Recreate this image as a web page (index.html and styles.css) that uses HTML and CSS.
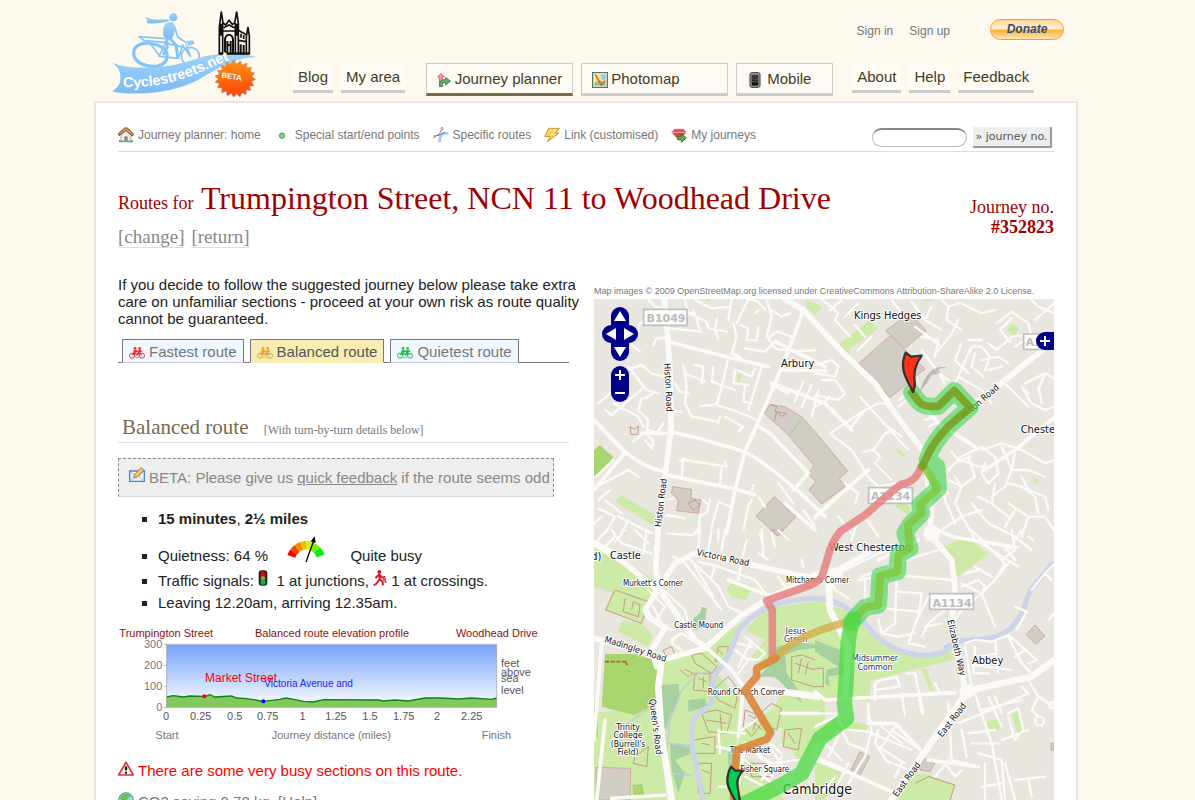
FILE: index.html
```html
<!DOCTYPE html>
<html lang="en">
<head>
<meta charset="utf-8">
<title>CycleStreets: Journey planner</title>
<link rel="stylesheet" href="styles.css">
</head>
<body>
<svg class="defs" width="0" height="0" aria-hidden="true">
  <symbol id="bike" viewBox="0 0 48 36">
    <g fill="none" stroke="currentColor" stroke-width="3"><circle cx="9" cy="26" r="7.5"/><circle cx="39" cy="26" r="7.5"/><circle cx="24" cy="26" r="7" stroke-width="2"/><path d="M9 26 16 14 30 14 39 26M16 14 24 26 31 12"/></g>
    <g fill="currentColor"><circle cx="18" cy="4" r="4"/><circle cx="32" cy="4" r="4"/><path d="M14 8h8l5 6-7 2-3 8h-5zM28 8h8l4 6-6 2-2 8h-5z"/></g>
  </symbol>
</svg>

<div class="wrap">
<header class="header">
  <a class="logo" href="#" aria-label="CycleStreets home">
    <svg width="146" height="87" viewBox="18 15 438 261">
      <defs>
        <linearGradient id="blue" x1="0" y1="0" x2="0" y2="1"><stop offset="0" stop-color="#9fd2fb"/><stop offset="1" stop-color="#7bbcf2"/></linearGradient>
        <linearGradient id="org" x1="0" y1="0" x2="0" y2="1"><stop offset="0" stop-color="#ff9416"/><stop offset="1" stop-color="#fb4209"/></linearGradient>
        <path id="ribbonText" d="M54 246C150 250 220 228 280 204S345 172 400 158"/>
      </defs>
      <g fill="none" stroke="#85c4f7" stroke-linecap="round" stroke-linejoin="round">
        <path stroke-width="10" d="M150 184C112 184 86 168 86 145s22-33 48-30 50 14 52 35-14 30-30 34"/>
        <circle cx="256" cy="154" r="27" stroke-width="5"/>
        <path stroke-width="5" d="M102 95 118 107 182 112M102 95 182 101M134 114 165 154 222 160M186 104 162 154M186 116 232 126 220 158M232 120 256 154M244 120 256 154"/>
        <path stroke-width="9" d="M192 98 213 120 218 156M186 96 186 128 176 146"/>
        <path stroke-width="5" d="M210 68 218 96 244 113"/>
      </g>
      <g fill="url(#blue)">
        <ellipse cx="205" cy="37" rx="12" ry="12"/>
        <path d="M184 54C192 48 206 50 209 60 212 74 208 90 200 101 190 105 174 102 174 84 174 70 177 60 184 54Z"/>
        <path d="M194 44C170 42 150 48 119 35 126 43 130 46 124 54 150 58 170 54 192 48Z"/>
        <path d="M246 108 266 106 268 116 250 122Z"/>
        <path d="M20 171C58 192 130 190 180 184 270 172 300 140 392 146 420 148 440 150 455 157 380 158 330 198 280 224 210 262 100 274 22 260 42 244 48 236 46 210 42 190 34 184 20 171Z"/>
      </g>
      <g fill="none" stroke="#111" stroke-width="5">
        <path fill="#fef9ee" d="M343 145V66L349 20 354 54 362 60 372 46 382 58 389 54 395 20 400 56V76L425 90 429 66 433 94V145z"/>
        <path d="M353 54V145M391 54V145M400 76V145M424 92V145M356 68 372 60 388 68M354 78H390M408 86V98M416 90V102M401 106 423 110" />
        <path stroke-width="6" d="M360 145V106C360 84 384 84 384 106V145M367 145V108M377 145V108M367 120H378M407 145V118M416 145V120M341 146H434"/>
        <path stroke-width="8" d="M348 56V92M395 56V92"/>
      </g>
      <text class="logo-text"><textPath href="#ribbonText">Cyclestreets.net</textPath></text>
      <path fill="url(#org)" stroke="#999" stroke-width="1.5" d="M386 164l9 13 11-10 5 13 14-6 1 14 14-1-4 13 13 4-8 11 11 8-12 7 7 12-13 2 3 13-13-2-1 14-12-6-6 13-10-10-9 11-7-12-12 8-3-14-14 4 1-14-14-1 6-12-13-5 10-9-10-9 13-5-6-12 14-1-2-14 13 3 2-13 12 6z"/>
      <text class="logo-beta" transform="rotate(9 380 214)" x="380" y="222" text-anchor="middle">BETA</text>
    </svg>
  </a>
  <div class="header-main">
    <div class="account">
      <a href="#">Sign in</a><a href="#">Sign up</a>
      <button class="donate" type="button">Donate</button>
    </div>
    <nav class="nav">
      <a href="#">Blog</a>
      <a href="#">My area</a>
      <a class="boxed wide first active" href="#"><svg width="16" height="16" viewBox="0 0 48 48"><path d="M8 44V14H2L13 2l12 12h-7v14" fill="#e99" stroke="#c66" stroke-width="3"/><path d="M9 46V36c0-10 8-14 20-13v-7l16 12-16 12v-7c-8-1-11 1-11 7v6z" fill="#5db36a" stroke="#278038" stroke-width="3"/></svg>Journey planner</a>
      <a class="boxed wide" href="#"><svg width="16" height="16" viewBox="0 0 48 48"><path d="M2 2h44v44H2z" fill="#fff" stroke="#5a7563" stroke-width="4"/><path d="M7 7h34v34H7z" fill="#f8e48a"/><path d="M26 7h15v16H30z" fill="#9cc5ee"/><path d="M7 33l14-8 20 6v10H7z" fill="#8fc876"/><path d="M10 7l18 33 12-15" fill="none" stroke="#e8553e" stroke-width="4"/></svg>Photomap</a>
      <a class="boxed phone" href="#"><svg width="16" height="16" viewBox="0 0 48 48"><rect x="9" y="2" width="30" height="44" rx="6" fill="#aaa" stroke="#333" stroke-width="3"/><rect x="14" y="8" width="20" height="33" fill="#111"/><path d="M18 10v24M24 10v24M30 10v24" stroke="#9bc" stroke-width="3" stroke-dasharray="3 3"/></svg>Mobile</a>
      <a class="after" href="#">About</a>
      <a href="#">Help</a>
      <a href="#">Feedback</a>
    </nav>
  </div>
</header>

<main class="page">
  <div class="subnav">
    <a href="#"><svg width="16" height="16" viewBox="0 0 48 48"><path d="M3 46h42v-8l-7 3H10l-7-3z" fill="#65ad55"/><path d="M9 22 24 10l15 14v18H9z" fill="#eee" stroke="#888" stroke-width="2"/><path d="M19 42V28h10v14z" fill="#888"/><path d="M3 26 1 20 20 3h8l19 18-4 6-19-16z" fill="#d99a58" stroke="#7c4a20" stroke-width="3"/></svg>Journey planner: home</a>
    <a class="dot" href="#"><svg width="16" height="16" viewBox="0 0 48 48"><circle cx="24" cy="26" r="8" fill="#82cf82" stroke="#4ea64e" stroke-width="3"/></svg>Special start/end points</a>
    <a href="#"><svg width="16" height="16" viewBox="0 0 48 48"><path d="M20 46C18 28 26 16 46 20" fill="none" stroke="#a8cbf5" stroke-width="8"/><path d="M4 29 18 24 27 5M8 25 18 24 36 16" fill="none" stroke="#667" stroke-width="2.5"/><circle cx="4" cy="29" r="3" fill="#fff" stroke="#667" stroke-width="2"/><circle cx="27" cy="5" r="3.5" fill="#fff" stroke="#667" stroke-width="2"/></svg>Specific routes</a>
    <a href="#"><svg width="16" height="16" viewBox="0 0 48 48"><path d="M14 4H46L34 18H45L10 44 19 29H2z" fill="#fbd25d" stroke="#cc9429" stroke-width="3"/><path d="M16 9h20L22 23h10" fill="none" stroke="#fff0a5" stroke-width="3"/></svg>Link (customised)</a>
    <a href="#"><svg width="16" height="16" viewBox="0 0 48 48"><path d="M10 7h28l8 9-22 24L2 16z" fill="#e7434e" stroke="#d98080" stroke-width="2"/><path d="M3 16h42" fill="none" stroke="#f9a5a5" stroke-width="3"/><path d="M20 28h11v-8l15 13-15 13v-8H20z" fill="#68ad3e" stroke="#337523" stroke-width="3"/></svg>My journeys</a>
    <form class="find">
      <input type="text" aria-label="Journey number">
      <button type="button">» journey no.</button>
    </form>
  </div>

  <div class="title">
    <div>
      <h1><small>Routes for</small> Trumpington Street, NCN 11 to Woodhead Drive</h1>
      <p class="title-links"><a href="#">[change]</a><a href="#">[return]</a></p>
    </div>
    <p class="journey-no">Journey no.<strong>#352823</strong></p>
  </div>

  <div class="columns">
    <section class="details">
      <p class="notice">If you decide to follow the suggested journey below please take extra care on unfamiliar sections - proceed at your own risk as route quality cannot be guaranteed.</p>
      <div class="tabs">
        <a class="fast" href="#"><svg width="16" height="12"><use href="#bike"/></svg>Fastest route</a>
        <a class="balanced" href="#"><svg width="16" height="12"><use href="#bike"/></svg>Balanced route</a>
        <a class="quiet" href="#"><svg width="16" height="12"><use href="#bike"/></svg>Quietest route</a>
      </div>
      <h2>Balanced route <small>[With turn-by-turn details below]</small></h2>
      <p class="beta"><svg width="16" height="16" viewBox="0 0 48 48"><path d="M2 12h44v31H2z" fill="#eef4fd" stroke="#4b83cf" stroke-width="4"/><path d="M5 15l19 15 19-15M5 40l14-13M43 40 29 27" fill="none" stroke="#8db0e0" stroke-width="2.5"/><path d="M14 33l3-11L36 2l9 7-20 21z" fill="#f6c469" stroke="#b9822e" stroke-width="3"/></svg>BETA: Please give us <a href="#">quick feedback</a> if the route seems odd</p>
      <ul class="facts">
        <li><strong>15 minutes</strong>, <strong>2½ miles</strong></li>
        <li class="quietness">Quietness: 64 %
          <svg width="38" height="28" viewBox="0 0 114 84">
            <g fill="none" stroke-width="25"><path d="M13 61A51 51 0 0 1 20 48" stroke="#f00"/><path d="M20 48A51 51 0 0 1 31 37" stroke="#f04a00"/><path d="M31 37A51 51 0 0 1 44 30" stroke="#f58a00"/><path d="M44 30A51 51 0 0 1 58 27" stroke="#eebd00"/><path d="M58 27A51 51 0 0 1 74 31" stroke="#d5f000"/><path d="M74 31A51 51 0 0 1 90 42" stroke="#80f000"/><path d="M90 42A51 51 0 0 1 101 60" stroke="#08ee12"/></g>
            <path d="M57 78 80 14" stroke="#000" stroke-width="4"/><path d="M83 1 86 21 71 16z"/>
          </svg>
          <span>Quite busy</span></li>
        <li>Traffic signals: <svg width="10" height="16" viewBox="0 0 30 48"><rect x="2" y="1" width="26" height="46" rx="9" fill="#222"/><circle cx="15" cy="12" r="8" fill="#d00c12"/><circle cx="15" cy="25" r="7" fill="#b9903a"/><circle cx="15" cy="37" r="8" fill="#0fae3d"/></svg>&nbsp; 1 at junctions, <svg width="14" height="16" viewBox="0 0 42 48"><circle cx="19" cy="6" r="6" fill="#d3202c"/><path d="M19 12 20 28 9 42 2 46M20 27 29 36 30 46M18 14 7 24M20 15 28 23 37 20M30 29l9-1M35 36l5-1" fill="none" stroke="#d3202c" stroke-width="6"/></svg> 1 at crossings.</li>
        <li class="times">Leaving 12.20am, arriving 12.35am.</li>
      </ul>

      <svg class="profile" width="451" height="124" viewBox="69 78 1353 372">
        <defs><linearGradient id="sky" x1="0" y1="0" x2="0" y2="1"><stop offset="0" stop-color="#75a3fa"/><stop offset="1" stop-color="#fff"/></linearGradient></defs>
        <path d="M215 134H1205V322H215z" fill="url(#sky)"/>
        <path d="M215 291 235 287 265 291 285 288 330 289 345 284 360 291 410 288 425 294 455 296 475 299 505 304 555 298 573 294 600 299 625 304 655 306 685 299 850 300 865 303 900 300 940 303 990 294 1040 294 1090 297 1130 294 1190 298 1205 294V322H215z" fill="#82c85d"/>
        <path d="M215 291 235 287 265 291 285 288 330 289 345 284 360 291 410 288 425 294 455 296 475 299 505 304 555 298 573 294 600 299 625 304 655 306 685 299 850 300 865 303 900 300 940 303 990 294 1040 294 1090 297 1130 294 1190 298 1205 294" fill="none" stroke="#0a870a" stroke-width="4"/>
        <path d="M206 133H1205V322H206M215 133V322M206 196H215M206 259H215" fill="none" stroke="#999" stroke-width="2"/>
        <circle cx="328" cy="289" r="6" fill="#f00"/><circle cx="505" cy="304" r="6" fill="#00f"/>
        <g class="p-title"><text x="73" y="111">Trumpington Street</text><text x="711" y="111" text-anchor="middle">Balanced route elevation profile</text><text x="1328" y="111" text-anchor="end">Woodhead Drive</text></g>
        <g class="p-axis" text-anchor="end"><text x="202" y="144">300</text><text x="202" y="207">200</text><text x="202" y="270">100</text><text x="202" y="333">0</text></g>
        <g class="p-ticks" text-anchor="middle"><text x="213" y="361">0</text><text x="317" y="361">0.25</text><text x="419" y="361">0.5</text><text x="518" y="361">0.75</text><text x="623" y="361">1</text><text x="723" y="361">1.25</text><text x="825" y="361">1.5</text><text x="926" y="361">1.75</text><text x="1026" y="361">2</text><text x="1130" y="361">2.25</text></g>
        <g class="p-ticks"><text x="1218" y="201">feet</text><text x="1218" y="228">above</text><text x="1218" y="246">sea</text><text x="1218" y="281">level</text></g>
        <g class="p-axis"><text x="181" y="418">Start</text><text x="709" y="418" text-anchor="middle">Journey distance (miles)</text><text x="1248" y="418" text-anchor="end">Finish</text></g>
        <text class="p-red" x="330" y="246">Market Street</text><text class="p-blue" x="508" y="262">Victoria Avenue and</text>
      </svg>

      <p class="warning"><svg width="16" height="16" viewBox="0 0 48 48"><path d="M24 4 46 42H2z" fill="#fff" stroke="#d9303a" stroke-width="5" stroke-linejoin="round"/><path d="M24 16v12" stroke="#111" stroke-width="7"/><circle cx="24" cy="35" r="3.5" fill="#111"/></svg>There are some very busy sections on this route.</p>
      <p class="co2"><svg width="16" height="16" viewBox="0 0 48 48"><circle cx="24" cy="24" r="22" fill="#a8d4e8" stroke="#4ca05c" stroke-width="3"/><path d="M5 18C10 4 30 0 40 12L30 18 24 30 14 28z" fill="#6dbd62"/></svg>CO2 saving 0.78 kg. <a href="#">[Help]</a></p>
    </section>

    <section class="map-col">
      <p class="credit">Map images © 2009 OpenStreetMap.org licensed under CreativeCommons Attribution-ShareAlike 2.0 License.</p>
      <div class="map">
        <svg class="tiles" width="460" height="501" viewBox="27 87 1380 1503">
          <path class="land" d="M27 87H1407V1590H27z"/>
          <!-- parks and buildings -->
          <g>
            <path class="park" d="M665 90 712 110 690 133 665 112zM108 675 210 735 205 768 92 695zM458 310 468 310 465 338 455 335zM362 87h14v6h-14zM650 304h22v8z"/>
            <path class="field" d="M27 540 45 525 85 562 27 632z"/>
            <path class="built" d="M555 403 600 410 650 440 690 485 788 603 763 627 780 650 710 702 672 660 693 635 670 612 687 587 610 495 538 430z"/>
            <path class="built" d="M262 650 320 658 318 685 348 690 340 730 275 722 280 690 260 670zM568 680 633 740 578 798 513 738z"/>
            <path class="outline" d="M560 405 575 410 570 425 605 430 590 440 575 425 568 455M135 470 148 478 160 468 158 492 138 494zM310 700 330 690 345 705 325 722z"/>
            <path d="M612 495 650 450" stroke="#a9d592" stroke-width="5"/>
          </g>
          <g transform="translate(690 0)">
            <path class="park" d="M72 222 165 150 187 178 105 236V256zM0 100 22 112 0 132zM593 160 612 178 595 197 577 178zM248 535 272 555 265 562 245 545zM235 705 270 700 288 715 280 735zM652 632 660 624 676 636 665 643zM322 87h28l-15 10z"/>
            <path class="built" d="M225 197 330 297 225 383 132 280zM212 182 285 130 333 182 270 235z"/>
          </g>
          <g transform="translate(0 780)">
            <path class="park" d="M27 45 60 75 80 75 215 152 190 215 170 275 62 240 80 190 27 170zM110 270 170 280 205 320 190 350 100 305zM425 180 445 150 508 170 480 210 440 202zM480 300 545 235 720 210V520L560 440 520 400 500 380 540 330zM365 350 480 270 430 370 395 430 470 510 455 620 460 810H270L230 560V400z"/>
            <path class="park" d="M27 550 205 525 230 630 245 810H27zM460 600 560 540 600 480 720 500V590L640 700 590 590 460 670zM390 690H500L600 810H390zM590 550 720 555 720 600 630 670 590 640z"/>
            <path class="field" d="M60 372H150L230 378 215 520 150 555 50 530zM27 535H38V620H27zM142 765 172 762 178 800H145z"/>
            <path class="scrub" d="M228 465 280 462 285 500 255 560 240 600 220 550zM575 350 640 335 720 350 640 360 600 375 605 430 640 480 650 520 570 440 520 440 560 400zM255 640 315 650 320 670 270 690 300 730 280 790 260 720zM430 665 460 660 450 770 430 780zM310 510 360 505 365 530 310 545zM325 265 345 250 350 230 365 235 360 275 380 290 330 300z"/>
            <path class="built" d="M33 712 137 715 135 810H33zM560 0 578 18 595 0z"/>
            <path class="outline" d="M120 205 115 245 160 260 165 225 145 215 140 240M90 180 190 215 170 280 62 240zM285 420 310 440 325 430 300 418M235 360 260 350 270 375 240 375zM400 350 430 350 425 385 390 395zM320 375 350 370 395 410 380 430 330 400zM330 430 375 430 375 485 325 480zM385 480 430 440 460 480 450 535 400 510zM350 550 395 540 440 555 425 610 370 605zM325 630 390 620 390 670 330 670zM480 540 520 555 560 520 590 535 575 600 530 580 500 620 475 590zM600 600 650 595 640 660 595 650zM620 380 650 375 720 400V480L620 450zM150 680 190 650 185 710 145 700zM340 700 380 700 375 790 340 790zM490 700 560 700 560 740 500 740z"/>
            <path class="outline" d="M355 440V475M340 445 365 455M400 360 415 375M405 550 410 600M365 570 425 580M490 555 550 585M500 570 530 600M515 550 505 600M350 640 375 645M610 610 630 640M350 720 375 730M630 400 690 420M640 430 650 385M660 435 670 395"/>
            <path d="M60 395H125M100 25 120 2M122 395 128 410" stroke="#a87117" stroke-width="5" stroke-dasharray="12 5" fill="none"/>
          </g>
          <g transform="translate(690 780)">
            <path class="park" d="M385 50 455 20 522 72 430 140zM0 215 90 240 160 290 250 370 340 380 400 355 420 388 330 410 165 452V515L0 500zM515 575 550 565 565 592 525 610zM590 550 615 545 630 605 612 620zM320 420 335 415 357 485 345 482zM290 735 330 730 420 765 405 810H250zM0 580 90 570 160 585 150 610 70 600 30 630 0 640zM0 680 40 700 90 730 30 810H0z"/>
            <path class="scrub" d="M0 330 75 360 90 430 40 440 45 470 30 460 35 420 70 410 0 365z"/>
            <path class="built" d="M135 665 165 680 130 745 103 730zM325 685 360 700 345 725 315 720zM660 285 690 318 662 342 633 314zM708 640h9v20h-9z"/>
            <path class="outline" d="M0 415H25V470H0M300 760 340 740 420 765 405 810"/>
            <path d="M385 350 402 340 410 350 395 362z" fill="#b5c9e4"/>
          </g>
          <!-- river -->
          <path class="river" d="M352 1590C345 1500 305 1420 325 1350 340 1320 375 1320 380 1290 382 1260 380 1220 400 1200 445 1160 445 1090 475 1065 515 1025 560 990 690 985 760 985 820 1030 860 1085 930 1160 1060 1180 1100 1125 1140 1095 1200 1125 1265 1085 1330 1030 1320 970 1345 950L1407 875"/>
          <path class="stream" d="M235 1510 320 1515M240 1420 315 1425M245 1380 290 1260 340 1210 380 1215M100 1380 200 1310M255 1350 240 1500"/>
          <!-- roads -->
          <g class="minor">
            <path d="M190 87 210 110 235 115M250 130 330 128M250 175 350 185M300 90 310 130 365 155 370 175 425 185M325 120 345 180M395 145 390 180 400 205M440 90 430 150M330 90 380 115 435 110M205 225 215 205 240 205M140 225 165 245M150 210 165 160 180 150M455 160 490 87 520 95 540 120M465 165 490 175 485 210 515 212 520 170M440 250 455 200 445 160M545 90 560 140 545 200 570 235 625 245 690 240M555 200 575 185 620 200M510 130 520 120M560 120 590 140 615 130M480 235 540 245 570 215"/>
            <path d="M295 285 300 310 320 318 360 335M330 285 355 290 350 340M385 290 380 335 450 360M300 315 305 350 300 400 320 440 400 455M270 340 285 365 310 370M345 408 385 405 400 395M430 265 410 350 395 405 440 420 470 430 515 450M455 300 500 320 510 295M450 300 445 340 490 345M480 345 475 395 500 400M530 290 490 420M420 440 475 470 460 485M400 460 405 440M560 345 610 370M655 335 630 395M680 345 650 410M700 360 680 440M270 425 290 425M140 295 170 285 200 310 235 320M130 290 185 360 220 370M40 400 100 350M60 420 80 435 125 395 180 350M90 360 100 400M85 400 160 440 175 470M180 385 205 370M170 385 160 420 190 450 185 490M190 480 215 490 235 460M180 510 200 535 205 510 190 500"/>
            <path d="M145 515 175 490M130 600 160 620M35 650 130 600M27 625 85 570M60 690 110 730M75 660 40 690M40 715 90 740 60 790M100 740 200 790M130 750 100 810M50 740 27 760M290 620 295 565 305 570M300 570 425 590M410 590 405 640M425 590 420 575M295 580 285 570M250 690 265 685M245 735 300 745M355 690 370 705M375 690 365 730 345 735 340 790M400 700 380 770M400 695 435 710M500 660 505 645M500 690 490 710 475 780M520 680 540 710M525 790 530 810M245 790 325 795M345 770 325 795M400 780 400 810M625 700 580 640M655 720 690 770"/>
          </g>
          <g class="minor" transform="translate(690 0)">
            <path d="M20 87 70 130 60 150 105 200M45 120 80 90M90 140 130 100M120 165 150 200M170 200 130 240M230 90 260 130M290 95 330 150 380 180M350 110 330 150M380 90 400 110 430 100M400 110 395 150 440 180M300 170 380 230 360 250M430 150 410 190 380 230M470 230 500 230 525 260 510 300M460 210 500 210M440 220 420 270 460 310M480 250 470 290 505 320M520 220 545 240 590 200 630 195M545 160 590 125 640 160 650 200M555 180 590 145M560 185 585 215M600 230 620 215 660 210M640 235 690 220M650 90 670 110 717 130M660 150 717 100M440 100 500 130 540 120M500 270 550 260 580 280M520 300 560 290M320 240 350 280 390 340M370 310 400 330M430 320 500 360 530 400M470 230 420 340M320 200 370 210 360 260"/>
            <path d="M0 285 50 270 70 290 60 320 0 310M20 330 60 330 90 370 70 390 0 375M0 410 30 395 45 380M255 390 270 375M250 410 270 395M45 490 150 420 190 400 210 400M135 380 280 540M50 495 110 540 160 620 190 650 240 640M110 470 150 420M175 540 210 490 235 480M145 545 175 540 195 560 180 580 230 630M205 460 260 500M0 745 50 700 100 650M90 640 130 670 120 700M70 740 110 790M320 420 350 390M330 450 360 440M340 470 360 460M630 340 690 310 717 325M640 370 620 350M625 360 650 400 690 420 717 410M690 310 670 360M570 340 640 410M670 350 680 400"/>
            <path d="M400 600 440 560 500 530 540 560 550 610 520 640 500 610 510 580M440 570 490 590 530 590M460 560 480 620 440 650 400 630M420 620 440 650 420 700M500 540 560 520 620 540 690 580 717 570M560 530 590 600 570 650 530 680M600 550 590 600 640 600 690 620M620 620 640 660 690 680 700 720M580 640 620 650 660 680 670 730M540 640 530 700 580 740M490 680 530 700M470 700 520 760 600 800M500 720 440 740 380 780M580 700 640 740 690 740 717 780M600 720 570 770M640 740 620 800M400 670 360 650M390 690 420 760M410 545 435 575 465 560M420 700 480 810M130 740 110 810M150 740 190 800"/>
          </g>
          <g class="minor" transform="translate(0 780)">
            <path d="M60 5 40 30M80 0 110 40 200 70M120 0 90 35M150 0 190 40M185 0 175 70M30 35 80 60M60 50 90 20M345 0 340 50M380 0 370 60M420 0 410 60M485 30 470 90 460 150M520 70 550 90M530 0 535 80M560 10 570 50M580 0 610 30M650 90 655 110M580 140 600 170M310 85 360 130 400 170 430 230 475 250M300 100 340 150 410 240M265 80 300 100M340 95 400 110 510 150 550 200M390 110 380 140M330 110 385 200M190 180 240 230 215 270M235 180 300 240 320 320M205 230 230 280 260 300M260 330 290 310 320 330M270 320 260 340 290 360M195 250 180 230M480 320 540 370 520 390 480 385M450 360 490 390 460 430M460 340 500 350M500 330 460 410M400 600 405 670M400 605 480 610M395 650 440 660M470 600 500 580 525 560M500 660 560 700 640 690M520 680 610 740M560 700 530 750M590 680 560 740M480 690 560 760M555 640 590 670M555 650 600 720M480 740 540 770M400 770H440V810"/>
          </g>
          <g class="minor" transform="translate(690 780)">
            <path d="M80 125 190 70 270 50M140 140 290 85 370 60M130 150 190 140M240 135 410 150M245 150 240 280 200 310 250 320 300 310M250 185 320 190M200 235 310 245M320 190 310 260 280 340M340 200 300 280M390 240 340 280 320 320M330 290 380 280M280 340 330 350M150 150 150 230M190 270 200 310M180 460 180 510M185 455 245 440 255 470M260 490 270 555M300 430 325 550M275 430 300 430M310 490 320 550M360 460 375 490M180 480 250 470M160 520V570M70 570 90 600M440 170 490 150 510 170 500 190 540 290M450 130 490 120M500 190 440 240 410 280M440 160 500 190M540 150 570 100 520 50 470 0M500 40 560 80 610 110M560 90 600 60 590 0M570 60 610 50M600 20 650 60M620 0 600 30M640 20 655 30M580 100 540 150 500 190M600 90 560 40M650 180 690 130 710 150M720 100 690 130M600 230 635 245 605 300M700 270 717 250M450 340 480 330 530 335 580 315 620 350 665 390 640 400M480 350 475 430 520 430M490 380 545 370 540 330M540 370 550 430M580 320 620 400 660 440M600 380 630 360M450 350 470 470M475 405 590 420"/>
            <path d="M480 490 530 640 560 810M430 580 480 560 640 490M440 600 455 680M400 515 410 690 490 710M500 540 620 510M620 470 640 490M460 610 540 600M470 640 550 640M490 670 560 690 570 810M520 500 560 590M540 500 560 550M580 550 610 535 625 600 600 630 580 560M560 630 640 600M640 450 670 500 710 525M670 500 650 540 670 560M510 700 510 810M500 770 560 760M570 700 600 810M600 750 690 740M640 750 650 800M360 740 400 690M390 700 420 740 440 720M100 600 160 605M160 540 170 600 150 680 100 760M80 600 100 640 150 660M70 620 40 680M30 640 80 690M170 610 290 660M190 600 180 640 220 700M200 590 260 640M240 590 200 650M230 600 330 670M190 650 270 700M210 690 280 720M240 740 260 700M0 690 250 790M60 740 20 790M100 700 60 780M0 590 60 560M0 550H60M40 130 60 180 100 205M480 110 530 140"/>
            <circle cx="674" cy="573" r="13"/><circle cx="710" cy="525" r="9"/>
          </g>
          <g class="mid">
            <path d="M258 485 360 510 480 545C560 590 640 660 720 740M655 120 630 190 570 340 480 545 450 660 425 790M250 215 430 262 550 290M27 450 120 545C160 580 200 598 240 605M245 615 440 655 510 675M170 490 255 490M27 660 60 620 120 548 27 450M515 465 555 490 670 610 625 660M585 300 720 303M560 340 720 400M720 400 800 480M440 250 465 262M570 215 720 290M690 780 600 700"/>
            <path d="M690 740 850 600M1170 530 1060 460 970 360M1410 440 1290 540 1200 600M1020 590 1080 680M1040 770 1100 800 1280 830M1000 810 880 870M690 1265 720 1290 1110 1268M850 1360H930L1015 1450M690 1460 930 1570M1030 1470 1180 1490M430 930 560 980M590 1330H700M27 1410 50 1120 80 1110M35 1590 60 1350M460 1540 480 1420M80 1585 240 1575M360 1130 440 1200 475 1250 460 1400"/>
          </g>
          <g class="main">
            <path d="M238 87 248 200 255 300 258 480 240 620 222 740 218 800 212 900 225 965"/>
            <path d="M600 87 655 120 720 190 770 245 870 340 930 430 1020 550 1040 740M1410 210 1260 330 1160 410M1035 720 1040 800 1100 870 1110 950 1100 1060 1140 1260"/>
            <path d="M27 820 120 880 230 970 330 1110 360 1130M330 850 480 880 640 915 720 930M330 850 270 880 225 950 180 1020 190 1040 240 1075 200 1140 215 1190M27 1105 120 1130 230 1170 360 1135 470 1035 560 980 700 910 760 900 880 830"/>
            <path class="trunk" d="M230 1170 220 1250 230 1400 260 1590M1407 1170 1340 1220 1150 1262 1030 1430 920 1590M480 1250 700 1280M730 920 735 1020 790 1130 780 1280"/>
          </g>
          <g fill="#fbfaf7"><circle cx="1145" cy="1265" r="22"/><circle cx="1040" cy="790" r="25"/><circle cx="755" cy="910" r="18"/></g>
          <!-- road shields -->
          <g class="shield"><path d="M176 118H306V166H176z"/><path d="M1316 192H1390V238H1316z"/><path d="M851 653H982V700H851z"/><path d="M1034 971H1165V1018H1034z"/></g>
          <g class="shield-text"><text x="243" y="157">B1049</text><text x="1346" y="228">A1</text><text x="917" y="690">A1134</text><text x="1101" y="1010">A1134</text></g>
          <!-- place names -->
          <g class="place"><text x="908" y="146">Kings Hedges</text><text x="638" y="290">Arbury</text><text x="1389" y="489">Chesterton</text><text x="121" y="867">Castle</text><text x="855" y="842">West Chesterton</text><text x="1208" y="1182">Abbey</text><text x="34" y="871">d)</text><text class="city" x="697" y="1573">Cambridge</text></g>
          <g class="spot"><text x="204" y="948">Murkett's Corner</text><text x="698" y="938">Mitcham's Corner</text><text x="341" y="1073">Castle Mound</text><text x="484" y="1275">Round Church Corner</text><text x="495" y="1448">The Market</text><text x="539" y="1507">Fisher Square</text></g>
          <g class="common"><text x="632" y="1092">Jesus</text><text x="632" y="1116">Green</text><text x="870" y="1174">Midsummer</text><text x="870" y="1200">Common</text></g>
          <g class="college"><text x="129" y="1380">Trinity</text><text x="129" y="1404">College</text><text x="129" y="1430">(Burrell's</text><text x="129" y="1456">Field)</text></g>
          <g class="street">
            <text transform="translate(250 352) rotate(87)" y="9">Histon Road</text><text transform="translate(228 698) rotate(-83)" y="9">Histon Road</text>
            <text transform="translate(414 863) rotate(12)" y="9">Victoria Road</text><text transform="translate(152 1137) rotate(18)" y="9">Madingley Road</text>
            <text transform="translate(212 1370) rotate(83)" y="9">Queen's Road</text><text transform="translate(1184 395) rotate(-41)" y="9">Milton Road</text>
            <text transform="translate(1115 1133) rotate(77)" y="9">Elizabeth Way</text><text transform="translate(1101 1350) rotate(-52)" y="9">East Road</text><text transform="translate(965 1528) rotate(-54)" y="9">East Road</text>
          </g>
          <!-- routes -->
          <path class="route red" d="M1008 590C1000 620 975 640 950 642L920 665 840 735 765 785C730 830 735 850 712 915 705 945 640 955 545 992L562 1020V1165"/>
          <path class="route tan" d="M565 1170C620 1110 690 1080 800 1052"/>
          <path class="route orange" d="M572 1165 515 1195V1220L480 1260 557 1388 545 1408 455 1440 445 1590"/>
          <path class="route halo" d="M980 367C1000 390 1000 409 1040 409H1060L1108 362 1155 412 1095 465C1050 510 1035 540 1027 570L1055 590 1060 655 1005 705 1010 730 975 765 960 790 975 835 940 855 937 905 885 918 880 1005 840 1012 800 1055"/>
          <path class="route core" d="M1015 585 1058 655 1005 705 1010 730 968 765 975 835 940 855 937 905 885 918 880 1005 840 1012 800 1055"/>
          <path class="route olive" d="M980 367C1000 390 1000 409 1040 409H1060L1108 362 1155 412 1095 465C1050 510 1030 545 1012 590"/>
          <path class="route green" d="M805 1048C780 1110 790 1200 778 1300L785 1345 705 1405 650 1510 590 1545 480 1600"/>
          <!-- start and finish flags -->
          <path d="M1005 365C1020 315 1040 285 1085 292L1060 298 1065 310 1040 315 1025 340z" fill="#777" opacity=".4"/>
          <path class="flag" fill="#ff2f1a" d="M962 248 978 260 1010 257C985 290 985 320 990 345L984 366C968 330 940 300 962 248z"/>
          <path class="flag" fill="#00cf50" d="M438 1490 450 1502 474 1502C446 1530 460 1555 466 1600H455C438 1565 412 1540 438 1490z"/>
        </svg>
        <div class="controls">
          <button class="up" type="button" aria-label="Pan up"><svg width="12" height="10" viewBox="0 0 12 10"><path d="M6 0 12 10H0z"/></svg></button>
          <div class="sides"><button class="left" type="button" aria-label="Pan left"><svg width="10" height="12" viewBox="0 0 10 12"><path d="M0 6 10 0V12z"/></svg></button><button class="right" type="button" aria-label="Pan right"><svg width="10" height="12" viewBox="0 0 10 12"><path d="M10 6 0 0V12z"/></svg></button></div>
          <button class="down" type="button" aria-label="Pan down"><svg width="12" height="10" viewBox="0 0 12 10"><path d="M6 10 12 0H0z"/></svg></button>
          <button class="up zoom-in" type="button" aria-label="Zoom in"><svg width="10" height="10" viewBox="0 0 10 10"><path d="M4 0H6V4H10V6H6V10H4V6H0V4H4z"/></svg></button>
          <button class="down" type="button" aria-label="Zoom out"><svg width="10" height="10" viewBox="0 0 10 10"><path d="M0 4H10V6H0z"/></svg></button>
        </div>
        <button class="layers left" type="button" aria-label="Map layers"><svg width="10" height="10" viewBox="0 0 10 10"><path d="M4 0H6V4H10V6H6V10H4V6H0V4H4z"/></svg></button>
      </div>
    </section>
  </div>
</main>
</div>
</body>
</html>
```
FILE: styles.css
```css
* { box-sizing: border-box; }
body { margin: 0; height: 100vh; overflow: hidden; background: #fef9ee; color: #222; font: 15px/17px Arial, "Liberation Sans", sans-serif; }
p, h1, h2, ul { margin: 0; padding: 0; font-weight: normal; }
a { color: inherit; text-decoration: none; }
.defs { position: absolute; }
.wrap { padding: 0 117px 0 94px; }

.header { display: flex; height: 101px; padding-left: 17px; }
.logo { flex: none; margin: 10px 36px 0 0; height: 87px; }
.logo svg { display: block; }
.logo-text { font: bold 43px "Liberation Sans", sans-serif; fill: #fff; }
.logo-beta { font: bold 23px "Liberation Sans", sans-serif; fill: #fff; }
.header-main { flex: 1; }
.account { display: flex; justify-content: flex-end; align-items: center; height: 63px; padding: 0 14px 4px 0; color: #777; font-size: 12px; }
.account a { margin: 3px 16px 0 0; }
.donate { width: 74px; height: 21px; margin: 0 0 0 24px; padding: 0 0 2px; border: 1px solid #fa9a3c; border-radius: 11px; background: linear-gradient(#fdd594, #fff0d0 45%, #ffb239 55%, #ffe6b0); color: #2c5179; font: italic bold 12px "Liberation Sans", sans-serif; }
.nav { display: flex; align-items: flex-start; gap: 8px; color: #443c26; white-space: nowrap; }
.nav a { height: 30px; padding: 0 5px; border-bottom: 3px solid #ccc; background: #fefbf4; line-height: 28px; }
.nav .boxed { display: flex; align-items: center; gap: 3px; height: 33px; padding: 0 10px; border: 1px solid #ccc; border-bottom-width: 3px; line-height: 29px; }
.nav .boxed svg { margin-top: 3px; }
.nav .wide { width: 147px; }
.nav .first { margin-left: 13px; }
.nav .active { border-bottom-color: #776b4a; }
.nav .phone { width: 97px; gap: 4px; }
.nav .after { margin-left: 11px; }

.page { min-height: 700px; padding: 24px 22px 0; border: 2px solid #ece6d7; background: #fff; }
.subnav { display: flex; align-items: center; gap: 13px; height: 25px; padding-bottom: 8px; border-bottom: 1px solid #ddd; color: #777; font-size: 12px; white-space: nowrap; }
.subnav a { display: flex; align-items: center; gap: 4px; }
.subnav .dot { gap: 5px; }
.find { display: flex; align-items: center; gap: 6px; margin: 4px 2px 0 auto; }
.find input { width: 95px; height: 19px; padding: 0 8px; border: 1px solid #bbb; border-top: 2px solid #888; border-radius: 10px; background: #fff; }
.find button { width: 79px; height: 21px; padding: 0; border: 0 solid #999; border-width: 0 2px 2px 0; background: #eee; color: #555; font: 11px "DejaVu Sans", sans-serif; }

.title { display: flex; justify-content: space-between; height: 124px; padding-top: 26px; color: #a00000; font-family: Georgia, "Liberation Serif", serif; }
h1 { font-size: 32px; line-height: 40px; }
h1 small { font-size: 18px; }
.title-links { display: flex; gap: 7px; padding-top: 4px; color: #888; font-size: 19px; line-height: 20px; }
.title-links a { border-bottom: 1px solid #ddd; }
.journey-no { padding-top: 19px; font-size: 18px; line-height: 20px; text-align: right; }
.journey-no strong { display: block; }

.columns { display: grid; grid-template-columns: 1fr 460px; gap: 25px; }
.notice { margin-right: -18px; }
.tabs { display: flex; gap: 6px; margin-top: 12px; padding-left: 4px; border-bottom: 1px solid #778; color: #777; }
.tabs a { display: flex; align-items: center; gap: 4px; height: 24px; margin-bottom: -1px; padding: 0 6px; border: 1px solid #778; border-bottom-color: #ccd; background: #eff7ff; }
.tabs .balanced { border-bottom-color: #f9edb3; background: #f9edb3; color: #555; }
.tabs svg { margin-top: 4px; }
.fast svg { color: #e8313e; }
.balanced svg { color: #dca53e; }
.quiet svg { color: #2bb858; }
h2 { margin-top: 52px; padding: 0 4px; border-bottom: 1px solid #ddd; color: #776b4a; font: 21px/24px Georgia, "Liberation Serif", serif; }
h2 small { margin-left: 10px; color: #777; font-size: 12px; }
.beta { width: 436px; height: 39px; margin-top: 15px; padding: 0 10px; border: 1px dashed #888; border-bottom: 1px solid #ddd; background: #eee; color: #888; line-height: 38px; white-space: nowrap; }
.beta svg { margin-right: 4px; }
.beta a { text-decoration: underline; }
.facts { padding: 10px 0 0 40px; list-style: square; }
.facts li { line-height: 24px; }
.facts .quietness { line-height: 50px; height: 38px; }
.quietness svg { margin: 0 21px 0 15px; vertical-align: -3px; }
.facts .times { line-height: 20px; }
.profile { display: block; margin-top: 13px; font-family: "Liberation Sans", sans-serif; }
.p-title { fill: #8b1010; font-size: 33px; }
.p-axis { fill: #777; font-size: 33px; }
.p-ticks { fill: #555; font-size: 33px; }
.p-red { fill: #f00; font-size: 36px; }
.p-blue { fill: #22f; font-size: 30px; }
.warning { margin-top: 11px; color: #f00; }
.warning svg, .co2 svg { margin-right: 4px; vertical-align: -1px; }
.co2 { margin-top: 13px; color: #777; }

.credit { padding-top: 8px; font-size: 9px; line-height: 15px; color: #777; white-space: nowrap; }
.map { position: relative; }
.tiles { display: block; font-family: "DejaVu Sans", sans-serif; }
.land { fill: #e9e6e0; }
.park { fill: #cdeaa6; }
.field { fill: #a9d56f; }
.scrub { fill: #a6d0a0; }
.built { fill: #d2ccc7; stroke: #cc9090; stroke-width: 2; }
.outline { fill: none; stroke: #c69a84; stroke-width: 3; }
.river { fill: none; stroke: #ccd5e8; stroke-width: 16; }
.stream { fill: none; stroke: #b9cde0; stroke-width: 4; }
.minor, .mid, .main { fill: none; stroke: #fbfaf7; stroke-width: 7; stroke-linecap: round; stroke-linejoin: round; }
.mid { stroke-width: 11; }
.main { stroke-width: 17; }
.trunk { stroke-width: 20; }
.shield { fill: #fff; stroke: #bbb; stroke-width: 5; opacity: .9; }
.shield-text { fill: #bbb; font-size: 33px; font-weight: bold; text-anchor: middle; }
.place, .spot, .street, .common, .college { fill: #111; stroke: #fff; stroke-width: 6; stroke-linejoin: round; paint-order: stroke; text-anchor: middle; font-family: "DejaVu Sans Condensed", "DejaVu Sans", sans-serif; font-size: 33px; }
.place .city { font-size: 42px; }
.spot { font-size: 24px; }
.street { font-size: 27px; }
.common { fill: #223066; font-size: 26px; }
.college { font-size: 26px; }
.route { fill: none; stroke-linejoin: round; stroke-linecap: round; stroke-width: 23; }
.red { stroke: #e58080; stroke-opacity: .85; }
.tan { stroke: #d3ac48; stroke-opacity: .8; }
.orange { stroke: #dc8638; stroke-opacity: .9; }
.halo { stroke: #39d449; stroke-opacity: .58; stroke-width: 52; }
.core { stroke: #7fc73b; stroke-opacity: .8; }
.olive { stroke: #7a9c1c; stroke-opacity: .85; }
.green { stroke: #48da43; stroke-opacity: .75; stroke-width: 46; }
.flag { stroke: #333; stroke-width: 7; stroke-linejoin: round; }
.controls { position: absolute; top: 8px; left: 8px; display: flex; flex-direction: column; align-items: center; }
.map button { display: flex; align-items: center; justify-content: center; width: 18px; height: 18px; padding: 0; border: 0; background: #00008b; fill: #fff; }
.sides { display: flex; }
.map .up { border-radius: 9px 9px 0 0; }
.map .down { border-radius: 0 0 9px 9px; }
.map .left { border-radius: 9px 0 0 9px; }
.map .right { border-radius: 0 9px 9px 0; }
.map .zoom-in { margin-top: 5px; }
.map .layers { position: absolute; top: 33px; right: 0; }
```
